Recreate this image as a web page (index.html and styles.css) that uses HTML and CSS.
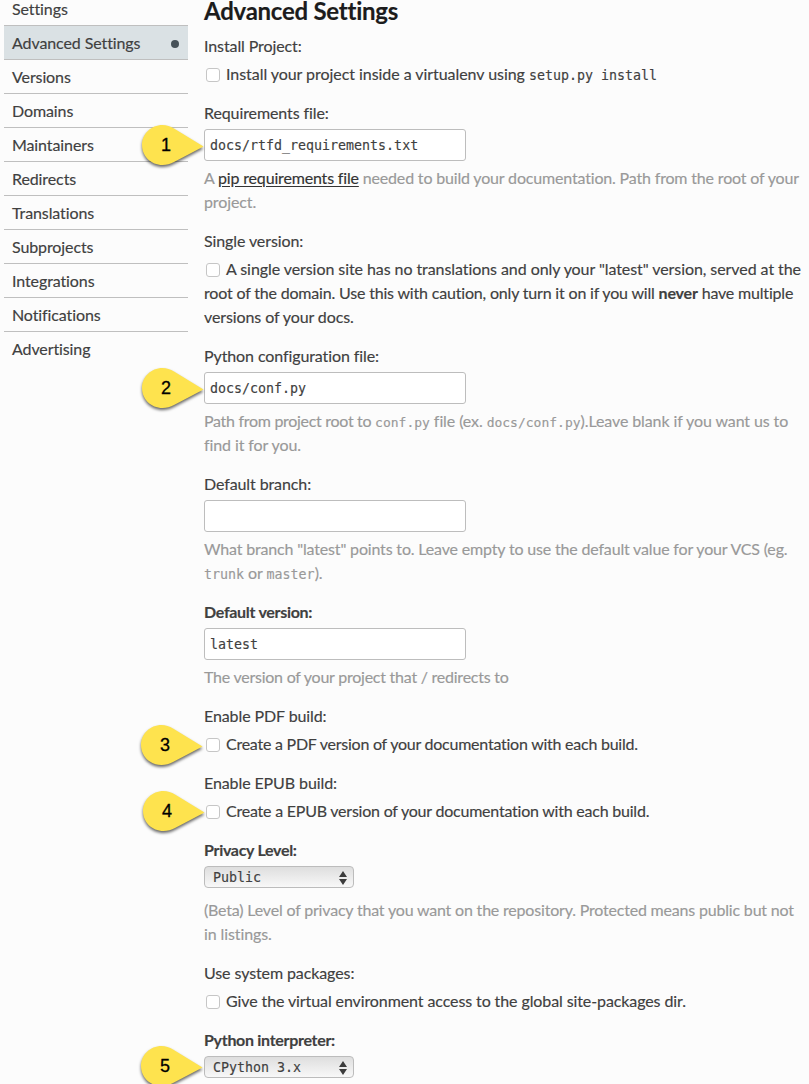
FILE: index.html
```html
<!DOCTYPE html>
<html lang="en">
<head>
<meta charset="utf-8">
<title>Advanced Settings</title>
<link rel="stylesheet" href="styles.css">
</head>
<body>
<svg class="defs" width="0" height="0" aria-hidden="true">
  <defs>
    <path id="pin-shape" d="M20.5 0C9 0 0 9 0 20s9 20 20.5 20c4 0 8-1.200 11.500-3L61.500 21.500 32 3.500C28.500 1.200 24.500 0 20.500 0Z"/>
    <path id="arrows" d="M4 0l4 6H0ZM4 14l4-6H0Z"/>
  </defs>
</svg>
<div class="page">
  <nav class="side">
    <a class="item">Settings</a>
    <a class="item active">Advanced Settings<i class="dot"></i></a>
    <a class="item">Versions</a>
    <a class="item">Domains</a>
    <a class="item">Maintainers</a>
    <a class="item">Redirects</a>
    <a class="item">Translations</a>
    <a class="item">Subprojects</a>
    <a class="item">Integrations</a>
    <a class="item">Notifications</a>
    <a class="item">Advertising</a>
  </nav>
  <main class="main">
    <h1 class="title">Advanced Settings</h1>
    <div class="field">
      <div class="label">Install Project:</div>
      <div class="check"><span class="line l1"><i class="box"></i>Install your project inside a virtualenv using <code>setup.py install</code></span></div>
    </div>
    <div class="field">
      <div class="label">Requirements file:</div>
      <div class="control"><div class="input">docs/rtfd_requirements.txt</div>
        <div class="pin p1"><svg width="66" height="46"><use href="#pin-shape"/></svg><b>1</b></div></div>
      <div class="hint"><span class="line l2">A <a class="link">pip requirements file</a> needed to build your documentation. Path from the root of your</span><span class="line">project.</span></div>
    </div>
    <div class="field">
      <div class="label">Single version:</div>
      <div class="check"><span class="line l3"><i class="box"></i>A single version site has no translations and only your "latest" version, served at the</span><span class="line l4">root of the domain. Use this with caution, only turn it on if you will <strong>never</strong> have multiple</span><span class="line l5">versions of your docs.</span></div>
    </div>
    <div class="field">
      <div class="label">Python configuration file:</div>
      <div class="control"><div class="input">docs/conf.py</div>
        <div class="pin p2"><svg width="66" height="46"><use href="#pin-shape"/></svg><b>2</b></div></div>
      <div class="hint"><span class="line l6"><span class="lead">Path from project root to </span><code>conf.py</code> file (ex. <code>docs/conf.py</code>).Leave blank if you want us to</span><span class="line">find it for you.</span></div>
    </div>
    <div class="field">
      <div class="label">Default branch:</div>
      <div class="control"><div class="input"></div></div>
      <div class="hint"><span class="line l7">What branch "latest" points to. Leave empty to use the default value for your VCS (eg.</span><span class="line l8"><code>trunk</code> or <code>master</code>).</span></div>
    </div>
    <div class="field">
      <div class="label required">Default version:</div>
      <div class="control"><div class="input">latest</div></div>
      <div class="hint"><span class="line l9">The version of your project that / redirects to</span></div>
    </div>
    <div class="field">
      <div class="label">Enable PDF build:</div>
      <div class="check"><span class="line l10"><i class="box"></i>Create a PDF version of your documentation with each build.</span>
        <div class="pin p3"><svg width="66" height="46"><use href="#pin-shape"/></svg><b>3</b></div></div>
    </div>
    <div class="field">
      <div class="label">Enable EPUB build:</div>
      <div class="check"><span class="line l11"><i class="box"></i>Create a EPUB version of your documentation with each build.</span>
        <div class="pin p4"><svg width="66" height="46"><use href="#pin-shape"/></svg><b>4</b></div></div>
    </div>
    <div class="field">
      <div class="label required">Privacy Level:</div>
      <div class="control"><div class="select">Public<svg width="8" height="14"><use href="#arrows"/></svg></div></div>
      <div class="hint low"><span class="line l12">(Beta) Level of privacy that you want on the repository. Protected means public but not</span><span class="line">in listings.</span></div>
    </div>
    <div class="field">
      <div class="label">Use system packages:</div>
      <div class="check"><span class="line l13"><i class="box"></i>Give the virtual environment access to the global site-packages dir.</span></div>
    </div>
    <div class="field">
      <div class="label required">Python interpreter:</div>
      <div class="control"><div class="select">CPython 3.x<svg width="8" height="14"><use href="#arrows"/></svg></div>
        <div class="pin p5"><svg width="66" height="46"><use href="#pin-shape"/></svg><b>5</b></div></div>
    </div>
  </main>
</div>
</body>
</html>
```
FILE: styles.css
```css
* { box-sizing: border-box; }
html { height: 100%; overflow: hidden; }
body {
  margin: 0;
  height: 1084px;
  overflow: hidden;
  background: #fcfcfc;
  color: #404040;
  font: 16px/24px Lato, "Open Sans", sans-serif;
  font-variant-ligatures: none;
  letter-spacing: -.1px;
  -webkit-text-stroke: .15px currentColor;
}
.defs { display: block; }
.page { display: flex; gap: 16px; padding-left: 4px; }
.side { width: 184px; flex: none; }
.item {
  display: flex;
  align-items: center;
  justify-content: space-between;
  height: 34px;
  padding: 0 9px 0 8px;
  border-bottom: 1px solid #bfbfbf;
}
.item:first-child { height: 26px; padding: 0 8px 8px; }
.item:last-child { border-bottom: 0; }
.item.active { background: #dae1e4; }
.dot { width: 8px; height: 8px; margin-top: 2px; border-radius: 50%; background: #465158; }
.main { flex: none; width: 605px; }
.title {
  margin: 0;
  height: 35px;
  font-size: 24px;
  line-height: 22px;
  font-weight: 700;
  letter-spacing: -.25px;
  color: #1c1c1c;
}
.field { margin-bottom: 15px; }
.label { height: 24px; line-height: 22px; }
.required { font-weight: 700; letter-spacing: -.3px; }
.line { display: block; height: 24px; line-height: 22px; white-space: nowrap; }
.l1 { letter-spacing: -.05px; }
.l2 { letter-spacing: -.17px; }
.l3 { letter-spacing: -.07px; }
.l4 { letter-spacing: -.18px; }
.l6 { letter-spacing: -.1px; }
.l6 .lead { letter-spacing: -.3px; }
.l6 code { font-size: 13px; }
.l7 { letter-spacing: -.17px; }
.l8 { letter-spacing: -.05px; }
.l9 { letter-spacing: -.24px; }
.l10 { letter-spacing: -.24px; }
.l11 { letter-spacing: -.22px; }
.l12 { letter-spacing: -.19px; }
.l13 { letter-spacing: -.1px; }
.check { position: relative; padding-top: 4px; }
.box {
  display: inline-block;
  width: 14px;
  height: 14px;
  margin: 0 6px 0 2px;
  vertical-align: -2px;
  border: 1px solid #c6c6c6;
  border-radius: 3px;
  background: #fff;
}
.control { position: relative; padding-top: 3px; }
.input {
  width: 262px;
  height: 32px;
  padding: 0 5px;
  border: 1px solid #bdbdbd;
  border-radius: 3px;
  background: #fff;
  line-height: 31px;
}
.input, .select, code { font-family: "DejaVu Sans Mono", monospace; font-size: 13.3px; letter-spacing: 0; }
code { line-height: 1; }
.hint { padding-top: 6px; color: #999; }
.hint.low { padding-top: 11px; }
.link { color: #333; text-decoration: underline; text-underline-offset: 2px; }
.select {
  display: flex;
  align-items: center;
  justify-content: space-between;
  width: 150px;
  height: 22px;
  padding: 1px 6px 0 8px;
  border: 1px solid #bcbcbc;
  border-radius: 4px;
  background: linear-gradient(#dedede, #f8f8f8);
  line-height: 21px;
}
.select svg { fill: #3c3c3c; }
.pin { position: absolute; left: -62px; top: -1px; width: 66px; height: 46px; }
.pin svg { display: block; overflow: visible; fill: #fee34e; filter: drop-shadow(0 2px 1.500px rgba(0, 0, 0, .6)); }
.pin b {
  position: absolute;
  left: 14px;
  top: 8px;
  width: 20px;
  text-align: center;
  font: 18px/24px "Liberation Sans", Arial, sans-serif;
  color: #000;
  -webkit-text-stroke: .3px #000;
}
.p3 { left: -63px; top: -4px; }
.p4 { left: -61px; top: -5px; }
.p5 { left: -63px; top: -7px; }
```
